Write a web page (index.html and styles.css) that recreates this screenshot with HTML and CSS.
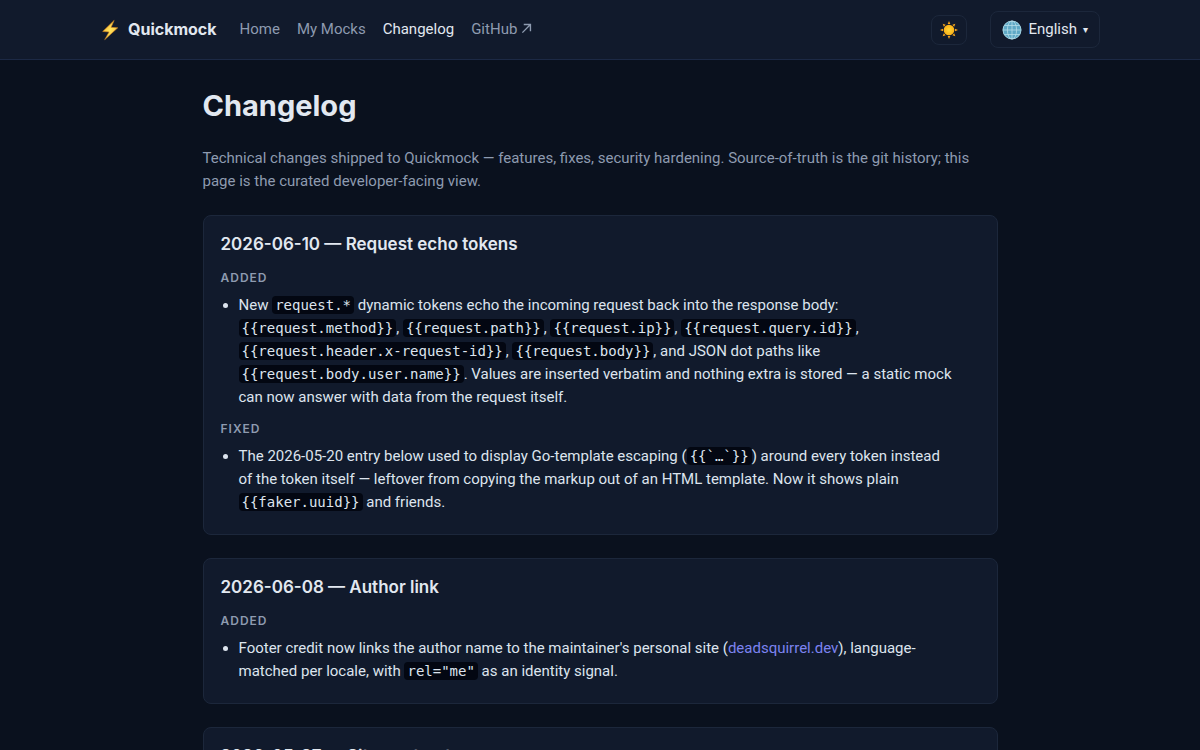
FILE: index.html
```
<!DOCTYPE html>
<html lang="en">
<head>
    <meta charset="UTF-8">
    <meta name="viewport" content="width=device-width, initial-scale=1.0">
    <title>Changelog - Quickmock</title>
    <link rel="stylesheet" href="styles.css">
</head>
<body>
    <header class="topbar">
        <div class="topbar-inner">
            <a href="#" class="brand">
                <svg class="bolt" viewBox="0 0 20 24" aria-hidden="true">
                    <defs>
                        <linearGradient id="boltFill" x1="0" y1="0" x2="1" y2="1">
                            <stop offset="0" stop-color="#f59a1b"/>
                            <stop offset="0.5" stop-color="#ffe45c"/>
                            <stop offset="1" stop-color="#ee9a22"/>
                        </linearGradient>
                    </defs>
                    <path d="M14.5 1.5 2 13.6l7 .5L4.2 22.5 18.5 9.6l-7.3-.5z" fill="url(#boltFill)" stroke="#c77b1c" stroke-width=".7" stroke-linejoin="round"/>
                </svg>
                Quickmock
            </a>
            <nav class="nav">
                <a href="#">Home</a>
                <a href="#">My Mocks</a>
                <a href="#" class="active">Changelog</a>
                <a href="#" class="external">GitHub
                    <svg viewBox="0 0 12 12" aria-hidden="true"><path d="M1.5 10.5 10 2M3 1.7h7.3V9" fill="none" stroke="currentColor" stroke-width="1.5"/></svg>
                </a>
            </nav>
            <div class="tools">
                <button class="theme-toggle" aria-label="Toggle theme">
                    <svg viewBox="0 0 20 20" aria-hidden="true">
                        <defs>
                            <radialGradient id="sunFill">
                                <stop offset="0" stop-color="#ffd83a"/>
                                <stop offset="1" stop-color="#fbb016"/>
                            </radialGradient>
                        </defs>
                        <g fill="#f5a31c">
                            <path id="ray" d="M10 1l1.3 3H8.7z"/>
                            <use href="#ray" transform="rotate(45 10 10)"/>
                            <use href="#ray" transform="rotate(90 10 10)"/>
                            <use href="#ray" transform="rotate(135 10 10)"/>
                            <use href="#ray" transform="rotate(180 10 10)"/>
                            <use href="#ray" transform="rotate(225 10 10)"/>
                            <use href="#ray" transform="rotate(270 10 10)"/>
                            <use href="#ray" transform="rotate(315 10 10)"/>
                        </g>
                        <circle cx="10" cy="10" r="5.3" fill="url(#sunFill)"/>
                    </svg>
                </button>
                <button class="lang">
                    <svg viewBox="0 0 20 20" aria-hidden="true">
                        <circle cx="10" cy="10" r="9.3" fill="#5fa9c6"/>
                        <g fill="none" stroke="#b5dde9" stroke-width=".8">
                            <circle cx="10" cy="10" r="9"/>
                            <ellipse cx="10" cy="10" rx="4.6" ry="9"/>
                            <path d="M10 1v18M1 10h18M2.5 5.5h15M2.5 14.5h15"/>
                        </g>
                    </svg>
                    English <span class="caret">▾</span>
                </button>
            </div>
        </div>
    </header>

    <main class="container">
        <h1>Changelog</h1>
        <p class="lead">Technical changes shipped to Quickmock — features, fixes, security hardening. Source-of-truth is the git history; this page is the curated developer-facing view.</p>

        <article class="card">
            <h2>2026-06-10 — Request echo tokens</h2>
            <h3>Added</h3>
            <ul>
                <li>New <code>request.*</code> dynamic tokens echo the incoming request back into the response body: <code>{{request.method}}</code>, <code>{{request.path}}</code>, <code>{{request.ip}}</code>, <code>{{request.query.id}}</code>, <code>{{request.header.x-request-id}}</code>, <code>{{request.body}}</code>, and JSON dot paths like <code>{{request.body.user.name}}</code>. Values are inserted verbatim and nothing extra is stored — a static mock can now answer with data from the request itself.</li>
            </ul>
            <h3>Fixed</h3>
            <ul>
                <li>The 2026-05-20 entry below used to display Go-template escaping (<code>{{`…`}}</code>) around every token instead of the token itself — leftover from copying the markup out of an HTML template. Now it shows plain <code>{{faker.uuid}}</code> and friends.</li>
            </ul>
        </article>

        <article class="card">
            <h2>2026-06-08 — Author link</h2>
            <h3>Added</h3>
            <ul>
                <li>Footer credit now links the author name to the maintainer's personal site (<a href="#">deadsquirrel.dev</a>), language-matched per locale, with <code>rel="me"</code> as an identity signal.</li>
            </ul>
        </article>

        <article class="card">
            <h2>2026-05-27 — Site contrast</h2>
        </article>
    </main>
</body>
</html>
```
FILE: styles.css
```
* {
    box-sizing: border-box;
}

body {
    margin: 0;
    background: #0a111e;
    color: #dde4ee;
    font-family: Roboto, "Liberation Sans", sans-serif;
    font-size: 15px;
    line-height: 23px;
}

a {
    color: #7c83f0;
    text-decoration: none;
}

.topbar {
    background: #111a2c;
    border-bottom: 1px solid #1c2945;
}

.topbar-inner {
    max-width: 1000px;
    height: 59px;
    margin: 0 auto;
    display: flex;
    align-items: center;
}

.brand {
    display: flex;
    align-items: center;
    gap: 8px;
    margin-right: 23px;
    color: #e2e8f0;
    font-family: Inter, "Liberation Sans", sans-serif;
    font-size: 16px;
    font-weight: 700;
}

.bolt {
    width: 20px;
    height: 22px;
}

.nav {
    display: flex;
    gap: 17px;
}

.nav a {
    color: #8e9bb0;
}

.nav .active {
    color: #e2e8f0;
}

.external svg {
    width: 11px;
    height: 11px;
}

.tools {
    display: flex;
    align-items: center;
    gap: 23px;
    margin-left: auto;
}

.tools button {
    display: flex;
    align-items: center;
    justify-content: center;
    background: transparent;
    border: 1px solid #1c273b;
    border-radius: 8px;
    color: #e2e8f0;
    font: inherit;
    cursor: pointer;
}

.theme-toggle {
    width: 36px;
    height: 30px;
    padding: 0;
}

.theme-toggle svg {
    width: 20px;
    height: 20px;
}

.tools .lang {
    height: 37px;
    padding: 0 11px;
    gap: 6px;
}

.lang svg {
    width: 20px;
    height: 20px;
}

.caret {
    font-size: 10px;
}

.container {
    max-width: 795px;
    margin: 0 auto;
    padding: 23px 0;
}

h1,
h2,
h3 {
    color: #e2e8f0;
    font-family: Inter, "Liberation Sans", sans-serif;
}

h1 {
    margin: 0 0 18px;
    font-size: 29px;
    line-height: 46px;
    font-weight: 700;
}

.lead {
    margin: 0 0 22px;
    color: #8e9bb0;
}

.card {
    margin-bottom: 23px;
    padding: 15px 17px 10px;
    background: #111a2c;
    border: 1px solid #1c273b;
    border-radius: 8px;
}

.card h2 {
    margin: 0 0 11px;
    font-size: 17px;
    line-height: 26px;
    font-weight: 600;
}

.card h3 {
    margin: 0 0 6px;
    color: #8e9bb0;
    font-size: 12px;
    line-height: 20px;
    font-weight: 600;
    letter-spacing: 1px;
    text-transform: uppercase;
}

.card ul {
    margin: 0 0 10px;
    padding: 0 24px 0 18px;
}

code {
    padding: 1px 3px;
    background: #030712;
    border-radius: 4px;
    font-family: "DejaVu Sans Mono", monospace;
    font-size: 14px;
    line-height: 1;
}
```
